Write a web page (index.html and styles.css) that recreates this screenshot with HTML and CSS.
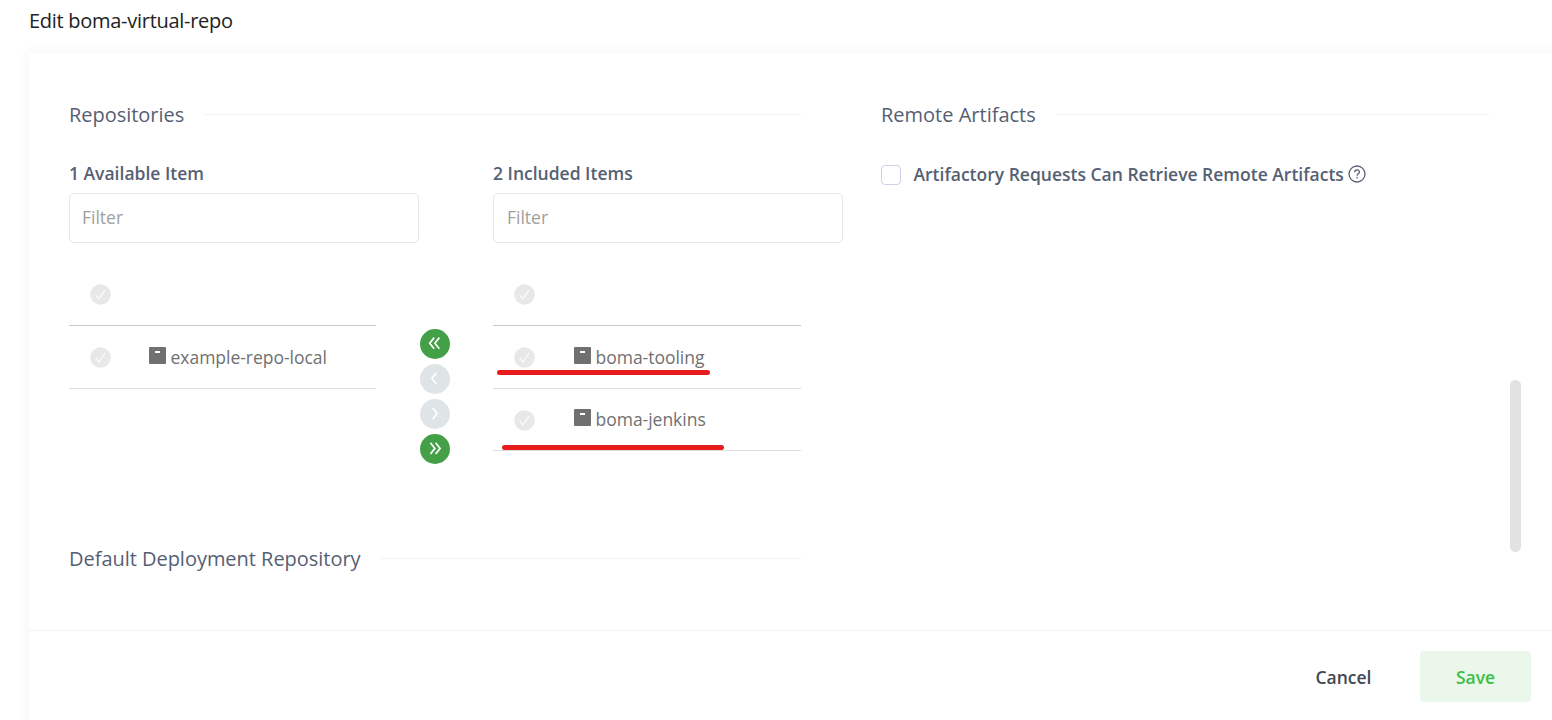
FILE: index.html
```html
<!DOCTYPE html>
<html lang="en">
<head>
<meta charset="utf-8">
<title>Edit boma-virtual-repo</title>
<link rel="stylesheet" href="styles.css">
</head>
<body>
<svg class="defs" width="0" height="0" aria-hidden="true">
  <symbol id="check" viewBox="0 0 21 21"><circle cx="10.5" cy="10.5" r="10.3" fill="#e8e8e8"/><path d="M5.7 11l3.2 3.8 6-8.6" fill="none" stroke="#fff" stroke-width="1.1"/></symbol>
  <symbol id="repo" viewBox="0 0 17 17"><rect width="17" height="17" rx="1" fill="#707070"/><rect x="6" y="4" width="5" height="2" fill="#fff"/></symbol>
</svg>
<h1 class="page-title">Edit boma-virtual-repo</h1>
<main class="card">
  <div class="card-body">
    <div class="column main-column">
      <h2 class="section-title"><span class="title-repos">Repositories</span></h2>
      <div class="transfer">
        <section class="list-side">
          <h3 class="list-title">1 Available Item</h3>
          <input class="filter" type="text" placeholder="Filter">
          <div class="list">
            <div class="row row-head"><svg class="check"><use href="#check"/></svg></div>
            <div class="row"><svg class="check"><use href="#check"/></svg><svg class="repo"><use href="#repo"/></svg><span class="name">example-repo-local</span></div>
          </div>
        </section>
        <div class="moves">
          <button class="move active" aria-label="Remove all"><svg viewBox="0 0 30 30"><path d="M14.2 8.6L9.7 14.2l4.5 5.6M19.4 8.6l-4.5 5.6 4.5 5.6"/></svg></button>
          <button class="move" aria-label="Remove selected"><svg viewBox="0 0 30 30"><path d="M16.2 8.8L11.9 14.4l4.3 5.6"/></svg></button>
          <button class="move" aria-label="Add selected"><svg viewBox="0 0 30 30"><path d="M12.8 8.8l4.3 5.6-4.3 5.6"/></svg></button>
          <button class="move active" aria-label="Add all"><svg viewBox="0 0 30 30"><path d="M10.4 8.8l4.5 5.6-4.5 5.6M15.6 8.8l4.5 5.6-4.5 5.6"/></svg></button>
        </div>
        <section class="list-side included">
          <h3 class="list-title">2 Included Items</h3>
          <input class="filter" type="text" placeholder="Filter">
          <div class="list">
            <div class="row row-head"><svg class="check"><use href="#check"/></svg></div>
            <div class="row"><svg class="check"><use href="#check"/></svg><svg class="repo"><use href="#repo"/></svg><span class="name">boma-tooling</span><i class="mark mark-first"></i></div>
            <div class="row row-last"><svg class="check"><use href="#check"/></svg><svg class="repo"><use href="#repo"/></svg><span class="name">boma-jenkins</span><i class="mark mark-second"></i></div>
          </div>
        </section>
      </div>
      <h2 class="section-title"><span class="title-deploy">Default Deployment Repository</span></h2>
    </div>
    <div class="column side-column">
      <h2 class="section-title"><span class="title-remote">Remote Artifacts</span></h2>
      <label class="option"><input class="box" type="checkbox"><span class="option-text">Artifactory Requests Can Retrieve Remote Artifacts</span>
        <svg class="help" viewBox="0 0 18 18"><circle cx="9" cy="9" r="8"/><path d="M6.7 7.2c0-3.1 4.7-3 4.7-.2 0 1.8-2.3 1.8-2.3 3.7"/><path d="M9.1 12v1.6"/></svg>
      </label>
    </div>
    <div class="scrollbar"></div>
  </div>
  <footer class="card-footer">
    <button class="btn cancel">Cancel</button>
    <button class="btn save">Save</button>
  </footer>
</main>
</body>
</html>
```
FILE: styles.css
```css
* { box-sizing: border-box; }
body {
  margin: 0;
  height: 720px;
  overflow: hidden;
  background: #fff;
  font-family: "Open Sans", sans-serif;
  font-size: 17.5px;
  color: #556073;
}
.defs { position: absolute; }
.page-title {
  margin: 0;
  height: 53px;
  padding: 7px 0 0 29px;
  font-size: 20px;
  line-height: 28px;
  font-weight: 400;
  letter-spacing: -.28px;
  color: #222;
}
.card {
  margin-left: 29px;
  width: 1560px;
  height: 700px;
  background: #fff;
  box-shadow: 0 0 13px rgba(0, 0, 0, .055);
}
.card-body {
  display: flex;
  height: 577px;
  padding: 47px 0 0 40px;
}
.main-column { width: 732px; margin-right: 80px; }
.side-column { width: 609px; }
.section-title {
  display: flex;
  align-items: center;
  gap: 20px;
  margin: 0;
  height: 29px;
  font-size: 20px;
  font-weight: 400;
  line-height: 29px;
  white-space: nowrap;
}
.section-title::after {
  content: "";
  flex: 1;
  height: 1px;
  background: #f2f2f9;
}
.title-repos, .title-deploy { letter-spacing: -.03px; }
.transfer { display: flex; height: 415px; padding-top: 32px; }
.list-side { width: 307px; flex: none; }
.included { width: 308px; }
.list-title {
  margin: 0;
  height: 32px;
  font-size: 17.5px;
  font-weight: 600;
  line-height: 25px;
}
.filter {
  display: block;
  width: 350px;
  height: 50px;
  padding: 0 12px 2px;
  border: 1px solid #e6e6e6;
  border-radius: 5px;
  background: #fff;
  font: 17.5px "Open Sans", sans-serif;
}
.included .filter { padding-left: 13px; }
.filter::placeholder { color: #a0a0a0; opacity: 1; }
.list { padding-top: 20px; color: #707070; }
.row {
  position: relative;
  display: flex;
  align-items: center;
  height: 63px;
  padding-left: 20.5px;
  border-bottom: 1px solid #dedede;
}
.row-head { border-color: #c9c9c9; }
.row-last { height: 62px; }
.check { width: 21px; height: 21px; flex: none; }
.row .repo { width: 17px; height: 17px; margin: 0 4.5px 3px 38.5px; flex: none; }
.included .row { padding-left: 21px; }
.included .repo { margin-left: 39px; }
.name { letter-spacing: -.02px; }
.row-last .name { margin-bottom: 2px; }
.row-last .repo { margin-bottom: 5px; }
.row-last .check { margin-top: 1px; }
.mark {
  position: absolute;
  height: 5px;
  border-radius: 3px;
  background: #e81c1c;
}
.mark-first { left: 4px; top: 44px; width: 213px; }
.mark-second { left: 9px; top: 55.5px; width: 222px; }
.moves {
  display: flex;
  flex-direction: column;
  gap: 5px;
  width: 117px;
  padding: 168px 0 0 44px;
}
.move {
  width: 30px;
  height: 30px;
  padding: 0;
  border: 0;
  border-radius: 50%;
  background: #dfe4e7;
}
.move.active { background: #43a047; }
.move svg { display: block; width: 30px; height: 30px; fill: none; stroke: #fff; stroke-width: 1.7; }
.option { display: flex; align-items: center; height: 26px; margin-top: 32px; }
.box {
  appearance: none;
  width: 20px;
  height: 20px;
  margin: 2px 12.5px 0 0;
  border: 1px solid #cdd0e8;
  border-radius: 4px;
  background: #fff;
}
.option-text { font-weight: 600; white-space: nowrap; }
.help { width: 18px; height: 18px; margin: 0 0 1px 4.5px; fill: none; stroke: #556073; stroke-width: 1.3; }
.scrollbar {
  width: 11px;
  height: 172px;
  margin: 280px 0 0 20px;
  border-radius: 6px;
  background: #e2e2e2;
}
.card-footer {
  display: flex;
  justify-content: flex-end;
  width: 1523px;
  padding: 20px 21px 0 0;
  border-top: 1px solid #f2f2f9;
}
.btn {
  height: 51px;
  padding: 0;
  border: 0;
  border-radius: 4px;
  background: transparent;
  font: 600 17.5px "Open Sans", sans-serif;
  color: #414857;
}
.cancel { width: 111px; margin-right: 21px; }
.save { width: 111px; background: #ebf7eb; color: #40be46; }
```
